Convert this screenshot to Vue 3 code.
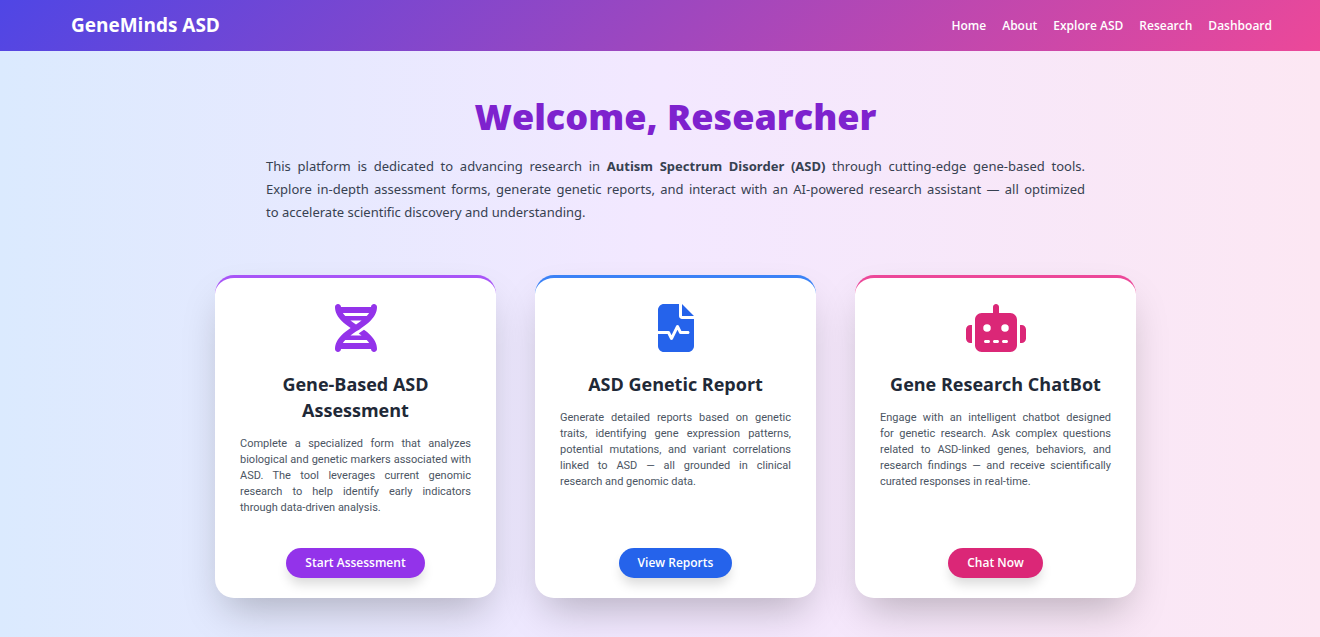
<script setup>
const links = ['Home', 'About', 'Explore ASD', 'Research', 'Dashboard']

const cards = [
  {
    tone: 'purple',
    title: 'Gene-Based ASD Assessment',
    text: 'Complete a specialized form that analyzes biological and genetic markers associated with ASD. The tool leverages current genomic research to help identify early indicators through data-driven analysis.',
    action: 'Start Assessment',
    viewBox: '0 0 448 512',
    path: 'M416 0c17.7 0 32 14.3 32 32c0 59.8-30.3 107.5-69.4 146.6c-28 28-62.5 53.5-97.3 77.4l-2.5 1.7c-11.9 8.1-23.8 16.1-35.5 23.9l-1.6 1c-6 4-11.9 7.9-17.8 11.9c-20.9 14-40.8 27.7-59.3 41.5H283.3c-9.8-7.4-20.1-14.7-30.7-22.1l7-4.7 3-2c15.1-10.1 30.9-20.6 46.7-31.6c25 18.1 48.9 37.3 69.4 57.7C417.7 372.5 448 420.2 448 480c0 17.7-14.3 32-32 32s-32-14.3-32-32H64c0 17.7-14.3 32-32 32s-32-14.3-32-32c0-59.8 30.3-107.5 69.4-146.6c28-28 62.5-53.5 97.3-77.4c-34.8-23.9-69.3-49.3-97.3-77.4C30.3 139.5 0 91.8 0 32C0 14.3 14.3 0 32 0S64 14.3 64 32H384c0-17.7 14.3-32 32-32zM338.6 384H109.4c-10.1 10.6-18.6 21.3-25.5 32H364.1c-6.8-10.7-15.3-21.4-25.5-32zM109.4 128H338.6c10.1-10.7 18.6-21.3 25.5-32H83.9c6.8 10.7 15.3 21.3 25.5 32zm55.4 48c18.4 13.8 38.4 27.5 59.3 41.5c20.9-14 40.8-27.7 59.3-41.5H164.7z',
  },
  {
    tone: 'blue',
    title: 'ASD Genetic Report',
    text: 'Generate detailed reports based on genetic traits, identifying gene expression patterns, potential mutations, and variant correlations linked to ASD — all grounded in clinical research and genomic data.',
    action: 'View Reports',
    viewBox: '0 0 448 512',
    path: 'M96 0C60.7 0 32 28.7 32 64V288H144c6.1 0 11.6 3.4 14.3 8.8L176 332.2l49.7-99.4c2.7-5.4 8.3-8.8 14.3-8.8s11.6 3.4 14.3 8.8L281.9 288H352c8.8 0 16 7.2 16 16s-7.2 16-16 16H272c-6.1 0-11.6-3.4-14.3-8.8L240 275.8l-49.7 99.4c-2.7 5.4-8.3 8.8-14.3 8.8s-11.6-3.4-14.3-8.8L134.1 320H32V448c0 35.3 28.7 64 64 64H352c35.3 0 64-28.7 64-64V160H288c-17.7 0-32-14.3-32-32V0H96zM288 0V128H416L288 0z',
  },
  {
    tone: 'pink',
    title: 'Gene Research ChatBot',
    text: 'Engage with an intelligent chatbot designed for\u00a0genetic research. Ask complex questions related to ASD-linked genes, behaviors, and research findings — and receive scientifically curated responses in real-time.',
    action: 'Chat Now',
    viewBox: '0 0 640 512',
    path: 'M320 0c17.7 0 32 14.3 32 32V96H472c39.8 0 72 32.2 72 72V440c0 39.8-32.2 72-72 72H168c-39.8 0-72-32.2-72-72V168c0-39.8 32.2-72 72-72H288V32c0-17.7 14.3-32 32-32zM208 384c-8.8 0-16 7.2-16 16s7.2 16 16 16h32c8.8 0 16-7.2 16-16s-7.2-16-16-16H208zm96 0c-8.8 0-16 7.2-16 16s7.2 16 16 16h32c8.8 0 16-7.2 16-16s-7.2-16-16-16H304zm96 0c-8.8 0-16 7.2-16 16s7.2 16 16 16h32c8.8 0 16-7.2 16-16s-7.2-16-16-16H400zM264 256a40 40 0 1 0 -80 0 40 40 0 1 0 80 0zm152 40a40 40 0 1 0 0-80 40 40 0 1 0 0 80zM48 224H64V416H48c-26.5 0-48-21.5-48-48V272c0-26.5 21.5-48 48-48zm544 0c26.5 0 48 21.5 48 48v96c0 26.5-21.5 48-48 48H576V224h16z',
  },
]
</script>

<template>
  <div class="page">
    <header class="topbar">
      <a class="brand" href="#">GeneMinds ASD</a>
      <nav class="links">
        <a v-for="link in links" :key="link" href="#">{{ link }}</a>
      </nav>
    </header>

    <main class="main">
      <h1>Welcome, Researcher</h1>
      <p class="intro">
        This platform is dedicated to advancing research in
        <strong>Autism Spectrum Disorder (ASD)</strong> through cutting-edge gene-based tools.
        Explore&nbsp;in-depth assessment forms, generate genetic reports, and interact with an
        AI-powered research assistant — all optimized to&nbsp;accelerate scientific discovery and
        understanding.
      </p>

      <section class="cards">
        <article v-for="card in cards" :key="card.title" class="card" :class="card.tone">
          <svg class="icon" :viewBox="card.viewBox" fill="currentColor" aria-hidden="true">
            <path :d="card.path" />
          </svg>
          <h2>{{ card.title }}</h2>
          <p>{{ card.text }}</p>
          <button type="button">{{ card.action }}</button>
        </article>
      </section>
    </main>
  </div>
</template>

<style>
body {
  margin: 0;
}
</style>

<style scoped>
.page {
  box-sizing: border-box;
  min-height: 100vh;
  font-family: 'Segoe UI', 'Open Sans', 'Noto Sans', sans-serif;
  background: linear-gradient(to right, #dbeafe, #f3e8ff, #fce7f3);
}

.topbar {
  display: flex;
  align-items: center;
  justify-content: space-between;
  padding: 12px 48px 12px 71px;
  color: #fff;
  background: linear-gradient(135deg, #4f46e5, #ec4899);
}

.topbar a {
  color: inherit;
  text-decoration: none;
}

.brand {
  font-size: 19px;
  font-weight: 700;
  line-height: 27px;
}

.links {
  display: flex;
  gap: 16px;
  font-size: 12px;
  font-weight: 600;
  line-height: 20px;
}

.main {
  padding: 44px 0 39px 31px;
}

h1 {
  margin: 0 0 16px;
  color: #7e22ce;
  font-size: 36px;
  font-weight: 800;
  line-height: 44px;
  text-align: center;
}

.intro {
  max-width: 819px;
  margin: 0 auto 51px;
  color: #374151;
  font-family: 'Segoe UI', 'Noto Sans', sans-serif;
  font-size: 13px;
  line-height: 23px;
  text-align: justify;
}

.intro strong {
  font-weight: 700;
}

.cards {
  display: grid;
  grid-template-columns: repeat(auto-fit, minmax(260px, 1fr));
  gap: 39px;
  max-width: 921px;
  margin: 0 auto;
}

.card {
  display: flex;
  flex-direction: column;
  align-items: center;
  padding: 26px 25px 20px;
  background: #fff;
  border-top: 3px solid var(--edge);
  border-radius: 19px;
  box-shadow: 0 20px 40px -10px rgba(0, 0, 0, 0.25);
}

.purple {
  --edge: #a855f7;
  --tone: #9333ea;
}

.blue {
  --edge: #3b82f6;
  --tone: #2563eb;
}

.pink {
  --edge: #ec4899;
  --tone: #db2777;
}

.icon {
  height: 48px;
  margin-bottom: 19px;
  color: var(--tone);
}

h2 {
  margin: 0 0 13px;
  color: #1f2937;
  font-size: 18px;
  font-weight: 700;
  line-height: 26px;
  text-align: center;
}

.card p {
  margin: 0 0 32px;
  color: #4b5563;
  font-family: 'Segoe UI', Roboto, sans-serif;
  font-size: 11px;
  line-height: 16px;
  text-align: justify;
}

button {
  margin-top: auto;
  padding: 5px 19px;
  color: #fff;
  font-family: inherit;
  font-size: 12px;
  font-weight: 600;
  line-height: 20px;
  background: var(--tone);
  border: 0;
  border-radius: 15px;
  box-shadow: 0 8px 12px -2px rgba(0, 0, 0, 0.15);
  cursor: pointer;
}
</style>
